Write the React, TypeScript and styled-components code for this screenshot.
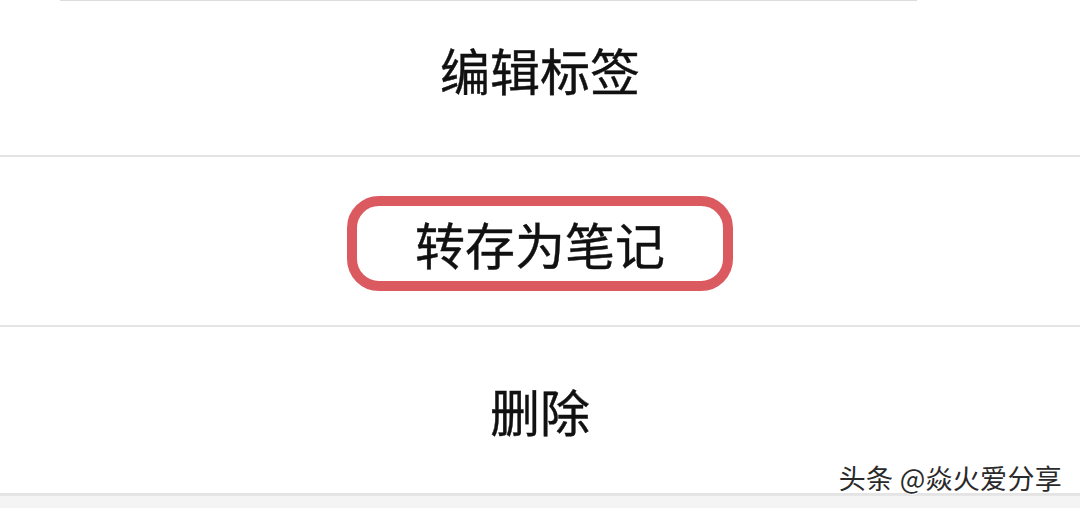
import React from 'react';
import styled, { createGlobalStyle } from 'styled-components';

const GlobalStyle = createGlobalStyle`
    html, body {
        margin: 0;
        padding: 0;
        background: #ffffff;
    }
    body {
        font-family: "Noto Sans CJK SC", "Noto Sans", sans-serif;
        overflow: hidden;
    }
`;

const Screen = styled.div`
    position: relative;
    width: 1080px;
    height: 508px;
    display: flex;
    flex-direction: column;
    background: #ffffff;
    overflow: hidden;
`;

const TopEdge = styled.div`
    height: 1px;
    margin: 0 163px 0 60px;
    background: #dcdcdc;
`;

const MenuRow = styled.div<{ $height: number; $up?: number; $down?: number }>`
    height: ${(p) => p.$height}px;
    flex-shrink: 0;
    display: flex;
    align-items: center;
    justify-content: center;
    padding-bottom: ${(p) => p.$up ?? 0}px;
    padding-top: ${(p) => p.$down ?? 0}px;
    box-sizing: border-box;
    border-bottom: 2px solid #e4e4e4;
`;

const Label = styled.span`
    font-size: 50px;
    line-height: 1;
    color: #111111;
    -webkit-text-stroke: 0.4px #111111;
`;

const Highlight = styled.div`
    width: 386px;
    height: 95px;
    box-sizing: border-box;
    border: 10px solid #da5a60;
    border-radius: 32px;
    display: flex;
    align-items: center;
    justify-content: center;
`;

const Footer = styled.div`
    flex: 1;
    background: #f4f4f4;
    border-top: 1px solid #e6e6e6;
`;

const Watermark = styled.div`
    position: absolute;
    right: 18px;
    bottom: 17px;
    font-size: 27px;
    line-height: 1;
    color: #2a2a2a;
    letter-spacing: 0.3px;
    text-shadow: 1px 1px 0 #ffffff, -1px 0 0 #ffffff, 0 -1px 0 #ffffff;
`;

const App: React.FC = () => {
    return (
        <>
            <GlobalStyle />
            <Screen>
                <TopEdge />
                <MenuRow $height={156} $up={18}>
                    <Label>编辑标签</Label>
                </MenuRow>
                <MenuRow $height={170} $down={4}>
                    <Highlight>
                        <Label>转存为笔记</Label>
                    </Highlight>
                </MenuRow>
                <MenuRow $height={168}>
                    <Label>删除</Label>
                </MenuRow>
                <Footer />
                <Watermark>头条 @焱火爱分享</Watermark>
            </Screen>
        </>
    );
};

export default App;
